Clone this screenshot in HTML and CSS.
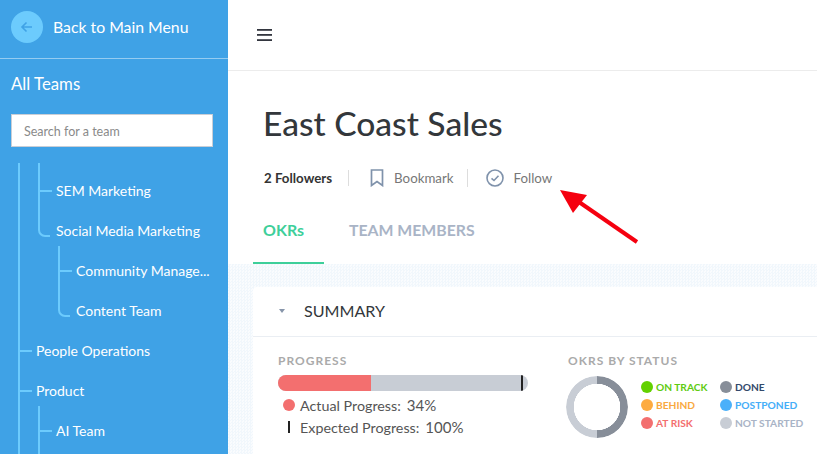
FILE: index.html
```html
<!DOCTYPE html>
<html lang="en">
<head>
  <meta charset="UTF-8" />
  <title>East Coast Sales</title>
  <link rel="stylesheet" href="styles.css">
</head>
<body>
  <aside class="sidebar">
    <div class="back">
      <span class="back-icon">
        <svg width="16" height="16" viewBox="0 0 16 16" fill="none" stroke="#3fa2e6" stroke-width="1.6"><path d="M13 8H3M7.5 3.500 3 8l4.500 4.500"/></svg>
      </span>
      Back to Main Menu
    </div>
    <div class="all-teams">All Teams</div>
    <input class="team-search" type="text" placeholder="Search for a team" />
    <ul class="tree">
      <li class="top">
        <ul>
          <li class="first"><span class="row">SEM Marketing</span></li>
          <li class="end">
            <span class="row">Social Media Marketing</span>
            <ul>
              <li><span class="row">Community Manage...</span></li>
              <li class="end"><span class="row">Content Team</span></li>
            </ul>
          </li>
        </ul>
      </li>
      <li><span class="row">People Operations</span></li>
      <li>
        <span class="row">Product</span>
        <ul>
          <li class="open"><span class="row">AI Team</span></li>
        </ul>
      </li>
    </ul>
  </aside>

  <main class="main">
    <header class="topbar">
      <svg width="15" height="12" viewBox="0 0 15 12" fill="#33363f"><rect width="15" height="1.800" y="0"/><rect width="15" height="1.800" y="5"/><rect width="15" height="1.800" y="10.200"/></svg>
    </header>

    <section class="team-head">
      <h1>East Coast Sales</h1>
      <div class="meta">
        <span class="followers">2 Followers</span>
        <span class="meta-item">
          <svg width="14" height="18" viewBox="0 0 14 18" fill="none" stroke="#7f92ab" stroke-width="1.7"><path d="M1.500 1h11v15.500L7 12.500l-5.500 4z"/></svg>
          Bookmark
        </span>
        <span class="meta-item">
          <svg width="18" height="18" viewBox="0 0 18 18" fill="none" stroke="#7f92ab" stroke-width="1.6"><circle cx="9" cy="9" r="8"/><path d="M5.500 9.300 8 11.500l4.500-4.800"/></svg>
          Follow
        </span>
      </div>
      <nav class="tabs">
        <a class="tab active">OKRs</a>
        <a class="tab">TEAM MEMBERS</a>
      </nav>
    </section>

    <section class="content">
      <div class="card">
        <div class="card-title"><span class="caret"></span>SUMMARY</div>
        <div class="card-body">
          <div class="progress">
            <div class="label">PROGRESS</div>
            <div class="bar">
              <div class="bar-fill" style="width: 37%"></div>
              <div class="bar-tick"></div>
            </div>
            <div class="stat"><span class="dot red"></span>Actual Progress:<b>34%</b></div>
            <div class="stat"><span class="tick"></span>Expected Progress:<b>100%</b></div>
          </div>
          <div class="status">
            <div class="label">OKRS BY STATUS</div>
            <div class="status-row">
              <div class="donut"></div>
              <ul class="legend">
                <li class="green"><span class="dot"></span>ON TRACK</li>
                <li class="navy"><span class="dot"></span>DONE</li>
                <li class="orange"><span class="dot"></span>BEHIND</li>
                <li class="blue"><span class="dot"></span>POSTPONED</li>
                <li class="coral"><span class="dot"></span>AT RISK</li>
                <li class="grey"><span class="dot"></span>NOT STARTED</li>
              </ul>
            </div>
          </div>
        </div>
      </div>
    </section>
  </main>

  <svg class="arrow" width="817" height="454" viewBox="0 0 817 454">
    <path d="M637 242 579 202" stroke="#f5000f" stroke-width="4" fill="none"/>
    <path d="M560 190 587 195 573 213z" fill="#f5000f"/>
  </svg>
</body>
</html>
```

FILE: styles.css
```css
* {
  box-sizing: border-box;
}
body {
  margin: 0;
  display: flex;
  height: 454px;
  overflow: hidden;
  font-family: Lato, "Noto Sans", sans-serif;
  background: #fff;
  color: #333;
}
ul {
  list-style: none;
  margin: 0;
  padding: 0;
}

/* sidebar */
.sidebar {
  width: 228px;
  height: 454px;
  flex-shrink: 0;
  display: flex;
  flex-direction: column;
  background: #3fa2e6;
  color: #fff;
  overflow: hidden;
}
.back {
  height: 59px;
  flex-shrink: 0;
  display: flex;
  align-items: center;
  gap: 10px;
  padding: 0 11px 5px;
  font-size: 15.800px;
  border-bottom: 1px solid rgba(255,255,255,0.45);
}
.back-icon {
  width: 32px;
  height: 32px;
  border-radius: 50%;
  background: #6ccbfd;
  display: flex;
  align-items: center;
  justify-content: center;
}
.all-teams {
  margin: 15px 11px 0;
  font-size: 16.800px;
  line-height: 20px;
}
.team-search {
  display: block;
  flex-shrink: 0;
  width: 202px;
  height: 33px;
  margin: 20px 0 16px 11px;
  padding: 1px 12px 0;
  border: 1px solid #c9ced6;
  border-radius: 0;
  background: #fff;
  font-family: inherit;
  font-size: 12.500px;
}
.team-search::placeholder {
  color: #8a8a8a;
}

/* tree */
.tree {
  margin-left: 18px;
  font-size: 14px;
}
.tree ul {
  margin-left: 18px;
}
.tree li {
  position: relative;
  padding-top: 10px;
  border-left: 2px solid #6ccbfd;
}
.tree li.top {
  padding-top: 0;
}
.tree li.first {
  padding-top: 13px;
}
.tree li.open {
  padding-bottom: 8px;
}
.tree li.end {
  border-left-color: transparent;
}
.tree li.end::before {
  content: "";
  position: absolute;
  left: -2px;
  top: 0;
  width: 10px;
  height: 29px;
  border-left: 2px solid #6ccbfd;
  border-bottom: 2px solid #6ccbfd;
  border-bottom-left-radius: 7px;
}
.row {
  position: relative;
  display: block;
  height: 30px;
  line-height: 30px;
  margin-left: 16px;
  white-space: nowrap;
}
.row::before {
  content: "";
  position: absolute;
  left: -16px;
  top: 14px;
  width: 12px;
  height: 2px;
  background: #6ccbfd;
}
.end > .row::before {
  display: none;
}

/* main */
.main {
  flex: 1;
  min-width: 0;
  height: 454px;
  display: flex;
  flex-direction: column;
  overflow: hidden;
}
.topbar {
  height: 71px;
  flex-shrink: 0;
  display: flex;
  align-items: center;
  padding: 0 0 0 29px;
  border-bottom: 1px solid #ececec;
}
.team-head {
  flex-shrink: 0;
  padding: 0 0 0 25px;
}
h1 {
  margin: 34px 0 0 10px;
  font-size: 33.600px;
  line-height: 36px;
  font-weight: 500;
  color: #33373b;
}
.meta {
  display: flex;
  align-items: center;
  margin: 27px 0 0 11px;
  height: 20px;
  font-size: 13.300px;
}
.followers {
  font-weight: 700;
  padding-right: 16px;
  border-right: 1px solid #ddd;
}
.meta-item {
  display: flex;
  align-items: center;
  gap: 10px;
  color: #777;
  padding: 0 13px 0 21px;
  border-right: 1px solid #ddd;
}
.meta-item:last-child {
  padding-left: 18px;
  border-right: none;
}
.tabs {
  display: flex;
  margin-top: 24px;
  font-size: 15.800px;
  font-weight: 700;
}
.tab {
  height: 52px;
  padding: 8px 25px 0;
  color: #a9b4c6;
}
.tab.active {
  width: 71px;
  padding: 8px 0 0 10px;
  font-size: 16px;
  color: #3ecf9a;
  border-bottom: 2px solid #3ecf9a;
}

/* summary */
.content {
  flex: 1;
  min-height: 0;
  display: flex;
  padding: 23px 0 0 25px;
  background: repeating-conic-gradient(#f1f7fc 0 25%, #fafcfe 0 50%) 0 0 / 3px 3px;
}
.card {
  flex: 1;
  background: #fff;
  border-radius: 4px 0 0 0;
}
.card-title {
  display: flex;
  align-items: center;
  height: 50px;
  padding: 0 0 2px 26px;
  font-size: 16.100px;
  color: #33373b;
  border-bottom: 1px solid #eaeef3;
}
.caret {
  width: 0;
  height: 0;
  margin-right: 19px;
  border-left: 3px solid transparent;
  border-right: 3px solid transparent;
  border-top: 4px solid #8795aa;
}
.card-body {
  display: flex;
  padding: 16px 0 0 25px;
}
.progress {
  width: 290px;
  flex-shrink: 0;
}
.label {
  font-size: 12px;
  line-height: 16px;
  letter-spacing: 1px;
  color: #aaa;
  font-weight: 700;
}
.bar {
  position: relative;
  width: 250px;
  height: 16px;
  margin-top: 6px;
  border-radius: 8px;
  background: #c8cdd5;
  overflow: hidden;
}
.bar-fill {
  height: 100%;
  background: #f36f6f;
}
.bar-tick {
  position: absolute;
  top: 0;
  right: 5px;
  width: 2px;
  height: 16px;
  background: #222;
}
.stat {
  display: flex;
  align-items: center;
  height: 22px;
  margin-top: 3px;
  padding-left: 5px;
  font-size: 14.300px;
  color: #555;
}
.stat + .stat {
  margin-top: 0;
}
.stat b {
  font-weight: 400;
  margin-left: 6px;
  font-size: 15px;
}
.dot {
  width: 12px;
  height: 12px;
  border-radius: 50%;
  flex-shrink: 0;
}
.dot.red {
  background: #f36f6f;
  margin-right: 5px;
}
.tick {
  width: 2px;
  height: 12px;
  margin: 0 10px 0 5px;
  background: #222;
}
.status-row {
  display: flex;
  align-items: center;
  margin-top: 7px;
  margin-left: -2px;
}
.donut {
  width: 62px;
  height: 62px;
  flex-shrink: 0;
  border-radius: 50%;
  background: conic-gradient(#878e99 0 50%, #c8cdd5 0 100%);
  -webkit-mask: radial-gradient(circle, transparent 23px, #000 23.500px);
  mask: radial-gradient(circle, transparent 23px, #000 23.500px);
}
.legend {
  display: grid;
  grid-template-columns: 79px auto;
  row-gap: 4px;
  margin: 0 0 4px 13px;
  font-size: 10.200px;
  font-weight: 700;
}
.legend li {
  display: flex;
  align-items: center;
  gap: 3px;
  height: 14px;
  white-space: nowrap;
}
.legend .green { color: #5ecb10; }
.legend .green .dot { background: #62d100; }
.legend .navy { color: #33496b; }
.legend .navy .dot { background: #878e99; }
.legend .orange { color: #f9a93f; }
.legend .orange .dot { background: #fdab40; }
.legend .blue { color: #45aef8; }
.legend .blue .dot { background: #4ab0fa; }
.legend .coral { color: #f36f6f; }
.legend .coral .dot { background: #f36f6f; }
.legend .grey { color: #a9b4c6; }
.legend .grey .dot { background: #c8cdd5; }

/* annotation drawn over the screenshot */
.arrow {
  position: absolute;
  left: 0;
  top: 0;
  pointer-events: none;
}
```
